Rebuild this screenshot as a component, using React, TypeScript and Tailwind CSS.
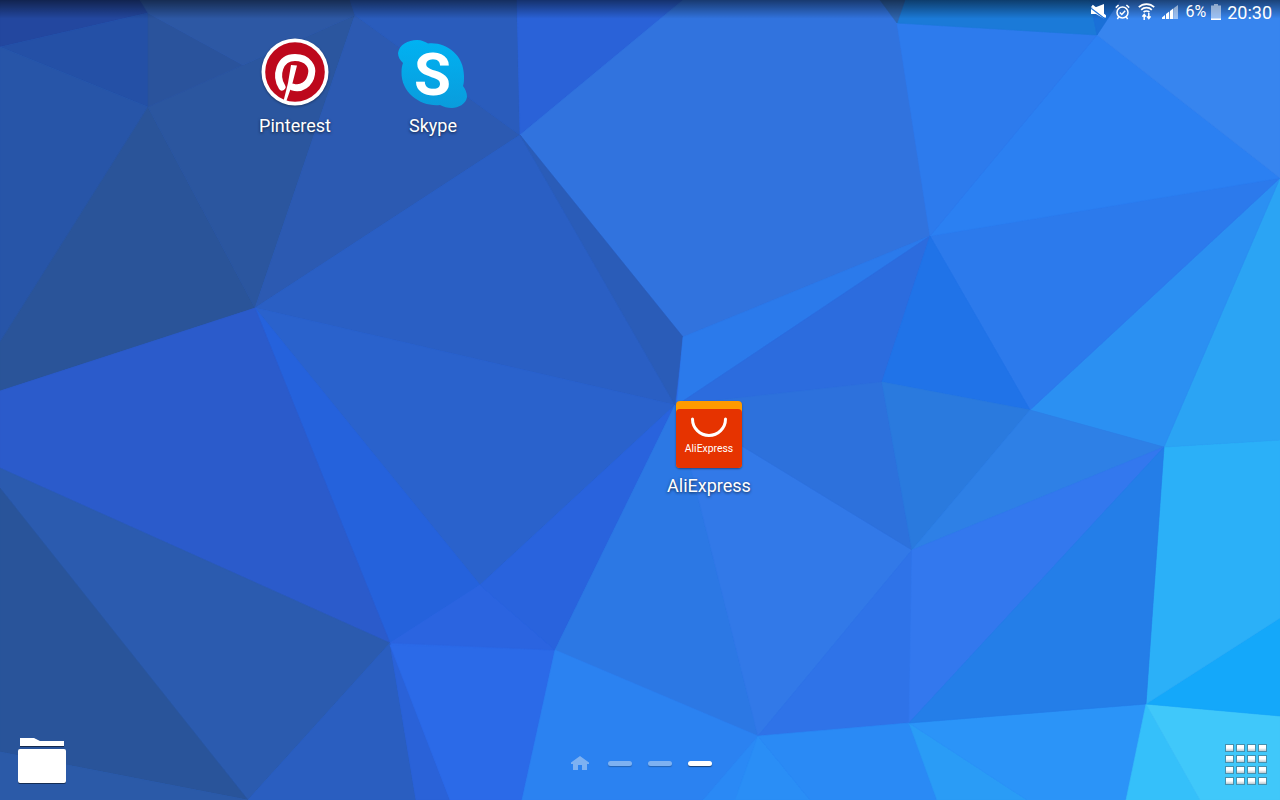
const facets: [string, string][] = [
  ["0,0 150,0 148,13 0,47", "#23479f"],
  ["0,47 148,13 148,107", "#2450a6"],
  ["0,47 148,107 0,342", "#2755a8"],
  ["148,107 255,308 0,391 0,342", "#2a5499"],
  ["148,107 243,65 355,15 255,308", "#2b569f"],
  ["148,13 243,65 148,107", "#2a539c"],
  ["148,13 140,0 350,0 355,15 243,65", "#2d58a4"],
  ["355,15 520,135 255,308", "#2c5ab2"],
  ["355,15 350,0 517,0 520,135", "#2a5cbc"],
  ["517,0 683,0 520,135", "#2a62d8"],
  ["520,135 683,0 880,0 897,23 930,236 683,337", "#3173de"],
  ["255,308 520,135 675,405", "#2a5fc4"],
  ["520,135 683,337 675,405", "#2a5cb8"],
  ["255,308 675,405 480,585", "#2a62cc"],
  ["255,308 480,585 390,643", "#2562dc"],
  ["0,391 255,308 390,643 0,468", "#2b5bcb"],
  ["0,468 390,643 248,800 0,488", "#2b5baf"],
  ["0,488 248,800 0,752", "#29549a"],
  ["0,752 248,800 0,800", "#2b5aa8"],
  ["390,643 248,800 416,800", "#2a5ec0"],
  ["390,643 416,800 450,800", "#2a62d8"],
  ["390,645 450,800 522,800 555,650", "#2b6ae8"],
  ["390,643 480,585 555,650", "#2b64e0"],
  ["480,585 675,405 555,650", "#2963dd"],
  ["675,405 758,736 555,650", "#2c78e4"],
  ["675,405 912,550 758,736", "#3279e8"],
  ["555,650 758,736 703,800 522,800", "#2b82f1"],
  ["758,736 703,800 735,800", "#2a89f5"],
  ["758,736 735,800 810,800", "#2a8ef6"],
  ["758,736 909,723 912,550", "#2f73e8"],
  ["758,736 810,800 937,800 909,723", "#2a8af5"],
  ["909,723 937,800 1027,800", "#2a9cf6"],
  ["909,723 1146,704 1126,800 1027,800", "#2b94f8"],
  ["1146,704 1126,800 1200,800", "#35c0fa"],
  ["1146,704 1200,800 1280,800 1280,716", "#40c8fa"],
  ["1146,704 1280,716 1280,618", "#14a8fa"],
  ["1146,704 1280,618 1280,440 1164,447", "#2bb0f8"],
  ["1164,447 1280,440 1280,178", "#2ba4f4"],
  ["1030,410 1164,447 1280,178", "#2b90f2"],
  ["930,236 1280,178 1030,410", "#2c7aec"],
  ["930,236 1097,35 1280,178", "#2b80f2"],
  ["1097,35 1120,0 1280,0 1280,178", "#3785ef"],
  ["897,23 1097,35 930,236", "#2d7bed"],
  ["897,23 905,0 1090,0 1097,35", "#1b7ad8"],
  ["880,0 905,0 897,23", "#2f66b0"],
  ["1090,0 1120,0 1097,35", "#1a70d8"],
  ["683,337 930,236 677,405", "#2b7aeb"],
  ["677,405 930,236 882,382", "#2c6cde"],
  ["930,236 1030,410 882,382", "#2073e8"],
  ["675,405 882,382 912,550", "#2d71dc"],
  ["882,382 1030,410 912,550", "#2a7ade"],
  ["1030,410 1164,447 912,550", "#2e80e6"],
  ["912,550 1164,447 909,723", "#3378ee"],
  ["1164,447 1146,704 909,723", "#247ee8"],
];

function Wallpaper() {
  return (
    <svg className="absolute inset-0" width="1280" height="800" viewBox="0 0 1280 800">
      {facets.map(([points, color]) => (
        <polygon key={points} points={points} fill={color} stroke={color} strokeWidth="0.6" />
      ))}
    </svg>
  );
}

function StatusBar() {
  return (
    <div className="relative flex h-[25px] items-center justify-end bg-linear-to-b from-black/50 to-transparent to-75% pr-2 font-['Roboto',sans-serif] text-white">
      {/* muted speaker */}
      <svg width="15" height="15" viewBox="0 0 15 15" className="mb-[2px]">
        <path d="M0 3.500H4L13 0V14.500L5 10H0Z" fill="#fff" />
        <path d="M0 4.200 14 14.800" stroke="#1f72d8" strokeWidth="1.300" />
        <path d="M1 1.800 15 13" stroke="#fff" strokeWidth="2.600" />
      </svg>
      {/* alarm */}
      <svg width="15" height="16" viewBox="0 0 15 16" className="mb-[2px] ml-[9px]" fill="none" stroke="#fff">
        <circle cx="7.500" cy="8.500" r="5.500" strokeWidth="1.500" />
        <path d="M4.800 8.500l2 2 3.400-3.800" strokeWidth="1.400" />
        <path d="M0.800 3.600 3.600 1M14.200 3.600 11.400 1M3.600 13 2.400 15.200M11.400 13 12.600 15.200" strokeWidth="1.500" />
      </svg>
      {/* wifi with data arrows */}
      <svg width="17" height="17" viewBox="0 0 17 17" className="mb-[2px] ml-[8px]" fill="none" stroke="#fff">
        <path d="M0.800 4.200C5 0 12 0 16.200 4.200" strokeWidth="1.700" />
        <path d="M3.200 6.800C6 4 11 4 13.800 6.800" strokeWidth="1.700" />
        <path d="M5.600 9.200C7.200 7.600 9.800 7.600 11.400 9.200" strokeWidth="1.700" />
        <path d="M6.200 17v-5M4.400 13.600l1.800-2.200 1.800 2.200M10.800 10v5M9 13.400l1.800 2.200 1.800-2.200" strokeWidth="1.500" />
      </svg>
      {/* signal */}
      <svg width="16" height="14" viewBox="0 0 16 14" className="mb-[1px] ml-[7px]" fill="#fff">
        <path d="M0 14v-1.500L3 10v4z" />
        <path d="M4 14V9L7.200 6.500v7.500z" />
        <path d="M8 14V6L11.400 3.200v10.800z" />
        <path d="M12 14V3L16 0v14z" opacity="0.5" />
      </svg>
      <span className="mb-[1px] ml-[7px] text-[16px] leading-none">6%</span>
      {/* battery */}
      <svg width="10" height="16" viewBox="0 0 10 16" className="mb-[2px] ml-[5px]" fill="#fff">
        <path d="M3 0h4v1.500h3V16H0V1.500h3z" opacity="0.5" />
        <rect y="14.500" width="10" height="1.500" />
      </svg>
      <span className="ml-[6px] text-[18px] leading-none">20:30</span>
    </div>
  );
}

function AppIcon({
  label,
  className,
  labelClass,
  children,
}: {
  label: string;
  className: string;
  labelClass: string;
  children: React.ReactNode;
}) {
  return (
    <div className={`absolute flex w-[140px] flex-col items-center ${className}`}>
      <div className="flex h-[68px] items-center justify-center">{children}</div>
      <span
        className={`font-['Roboto',sans-serif] text-[18px] leading-[24px] text-white [text-shadow:0_1px_3px_rgba(0,0,0,0.65)] ${labelClass}`}
      >
        {label}
      </span>
    </div>
  );
}

function PinterestIcon() {
  return (
    <svg width="68" height="68" viewBox="0 0 68 68" className="drop-shadow-[0_1px_1px_rgba(0,0,0,0.35)]">
      <circle cx="34" cy="34" r="33.500" fill="#fff" />
      <circle cx="34" cy="34" r="29.800" fill="#bd081c" />
      <path
        d="M21 49C14 38 18 19.500 34 19.500C48 19.500 52 30 50.500 36C49 46 40 52 31.500 49"
        fill="none"
        stroke="#fff"
        strokeWidth="7"
        strokeLinecap="round"
      />
      <path d="M30 27L36 27.500L31 47L25 64L22 65L27 45Z" fill="#fff" />
    </svg>
  );
}

function SkypeIcon() {
  return (
    <svg width="70" height="70" viewBox="0 0 70 70" className="translate-y-[2px]">
      <defs>
        <linearGradient id="skype" x1="0" y1="0" x2="0" y2="1">
          <stop offset="0" stopColor="#00b2f2" />
          <stop offset="1" stopColor="#0a9cdc" />
        </linearGradient>
      </defs>
      <path
        d="M19 1C24 1 27 3 30 4.500C47 2.500 66 15 66 37C66 41 66 44 65 47C67.500 50 69 54 69 58C68 65 60 69 54 69C49 69 46 68 42 66C24 68 3 55 3.500 33C3.500 29 4 27 5 24C2 21 0 18 0 14C1 6 10 1 19 1Z"
        fill="url(#skype)"
      />
      <text
        x="34.500"
        y="56"
        textAnchor="middle"
        fill="#fff"
        fontSize="60"
        fontWeight="700"
        className="font-['Roboto',sans-serif]"
      >
        S
      </text>
    </svg>
  );
}

function AliExpressIcon() {
  return (
    <div className="flex h-[67px] w-[66px] flex-col rounded-[4px] bg-[#ff9a00] shadow-[0_1px_2px_rgba(0,0,0,0.4)]">
      <div className="mt-[8px] flex flex-1 flex-col items-center rounded-[4px] bg-[#e63300]">
        <svg width="38" height="22" viewBox="0 0 38 22" className="mt-[7px]" fill="none">
          <path d="M2.500 3A16.500 16.500 0 0 0 35.500 3" stroke="#fff" strokeWidth="3" strokeLinecap="round" />
        </svg>
        <span className="mt-[4px] font-['Roboto',sans-serif] text-[10.400px] leading-[14px] text-white">
          AliExpress
        </span>
      </div>
    </div>
  );
}

function FolderIcon() {
  return (
    <div className="mb-[2px] flex w-[48px] flex-col items-center">
      <svg width="44" height="9" viewBox="0 0 44 9" className="drop-shadow-[0_1px_0_rgba(0,0,0,0.5)]">
        <path d="M0 0H14L20 3H44V8H0Z" fill="#fff" />
      </svg>
      <div className="mt-[2px] h-[34px] w-[48px] rounded-[2px] bg-white shadow-[0_1px_0_rgba(0,0,0,0.5)]" />
    </div>
  );
}

function PageDots() {
  return (
    <div className="flex items-center">
      <svg width="18" height="14" viewBox="0 0 18 14" fill="#7db1f2">
        <path d="M9 0L18 6.500V8H16V14H11V9H7V14H2V8H0V6.500Z" />
      </svg>
      <div className="ml-[19px] h-[5px] w-[24px] rounded-full bg-[#7db1f2] shadow-[0_1px_1px_rgba(0,0,0,0.25)]" />
      <div className="ml-[16px] h-[5px] w-[24px] rounded-full bg-[#7db1f2] shadow-[0_1px_1px_rgba(0,0,0,0.25)]" />
      <div className="ml-[16px] h-[5px] w-[24px] rounded-full bg-white shadow-[0_1px_1px_rgba(0,0,0,0.5)]" />
    </div>
  );
}

function AppsButton() {
  return (
    <div className="-mr-[2px] grid grid-cols-4 gap-x-[2px] gap-y-[3px]">
      {Array.from({ length: 16 }).map((_, i) => (
        <div key={i} className="h-[8px] w-[9px] border border-[#4690ad] bg-linear-to-b from-white from-50% to-[#b9c8d0]" />
      ))}
    </div>
  );
}

export default function App() {
  return (
    <div className="relative h-[800px] w-[1280px] overflow-hidden bg-[#2b6ae8]">
      <Wallpaper />
      <StatusBar />

      <AppIcon label="Pinterest" className="left-[225px] top-[38px]" labelClass="mt-[8px]">
        <PinterestIcon />
      </AppIcon>
      <AppIcon label="Skype" className="left-[363px] top-[38px]" labelClass="mt-[8px]">
        <SkypeIcon />
      </AppIcon>
      <AppIcon label="AliExpress" className="left-[639px] top-[400px]" labelClass="mt-[6px]">
        <AliExpressIcon />
      </AppIcon>

      {/* bottom row: folder, page indicator, apps */}
      <div className="absolute inset-x-0 bottom-0 grid grid-cols-[1fr_auto_1fr] pb-[15px] pl-[18px] pr-[15px]">
        <div className="self-end">
          <FolderIcon />
        </div>
        <div className="self-end pb-[15px]">
          <PageDots />
        </div>
        <div className="justify-self-end self-end">
          <AppsButton />
        </div>
      </div>
    </div>
  );
}
